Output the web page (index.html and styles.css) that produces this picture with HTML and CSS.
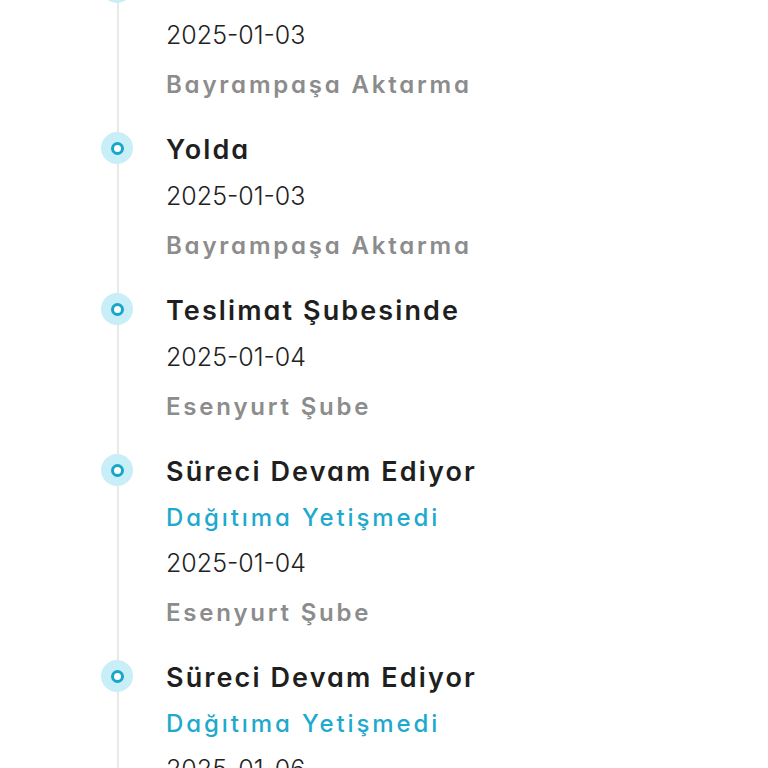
FILE: index.html
```html
<!DOCTYPE html>
<html>
<head>
  <title>Kargo Takip</title>
  <link rel="stylesheet" href="styles.css">
</head>
<body>
  <div class="timeline">
    <div class="event">
      <span class="dot"></span>
      <div class="title">Yolda</div>
      <div class="date">2025-01-03</div>
      <div class="place">Bayrampaşa Aktarma</div>
    </div>
    <div class="event">
      <span class="dot"></span>
      <div class="title">Yolda</div>
      <div class="date">2025-01-03</div>
      <div class="place">Bayrampaşa Aktarma</div>
    </div>
    <div class="event">
      <span class="dot"></span>
      <div class="title">Teslimat Şubesinde</div>
      <div class="date">2025-01-04</div>
      <div class="place">Esenyurt Şube</div>
    </div>
    <div class="event">
      <span class="dot"></span>
      <div class="title">Süreci Devam Ediyor</div>
      <div class="note">Dağıtıma Yetişmedi</div>
      <div class="date">2025-01-04</div>
      <div class="place">Esenyurt Şube</div>
    </div>
    <div class="event">
      <span class="dot"></span>
      <div class="title">Süreci Devam Ediyor</div>
      <div class="note">Dağıtıma Yetişmedi</div>
      <div class="date">2025-01-06</div>
      <div class="place">Esenyurt Şube</div>
    </div>
  </div>
</body>
</html>
```

FILE: styles.css
```css
body {
  margin: 0;
  background-color: #fff;
  font-family: Inter, "Noto Sans", sans-serif;
  font-feature-settings: "cv11";
  overflow: hidden;
}
.timeline {
  margin-top: -34px;
  margin-left: 117px;
  padding-left: 47px;
  border-left: 2px solid #e9e9e9;
  min-height: 900px;
}
.event {
  position: relative;
  padding-bottom: 19px;
}
.dot {
  position: absolute;
  left: -65px;
  top: 5px;
  width: 32px;
  height: 32px;
  border-radius: 50%;
  background-color: #c8eef8;
  display: flex;
  align-items: center;
  justify-content: center;
}
.dot::after {
  content: "";
  width: 7px;
  height: 7px;
  border-radius: 50%;
  border: 3px solid #17a5c9;
  background-color: #fff;
}
.title {
  font-size: 27px;
  font-weight: 600;
  letter-spacing: 2.1px;
  line-height: 46px;
  color: #1f1f1f;
}
.note {
  font-size: 24px;
  font-weight: 500;
  letter-spacing: 2.9px;
  line-height: 45px;
  color: #1ea9cd;
}
.date {
  font-size: 25px;
  font-weight: 300;
  line-height: 46px;
  color: #222;
}
.place {
  margin-top: 4px;
  font-size: 24px;
  font-weight: 600;
  letter-spacing: 2.8px;
  line-height: 46px;
  color: #8c8c8c;
}
```
